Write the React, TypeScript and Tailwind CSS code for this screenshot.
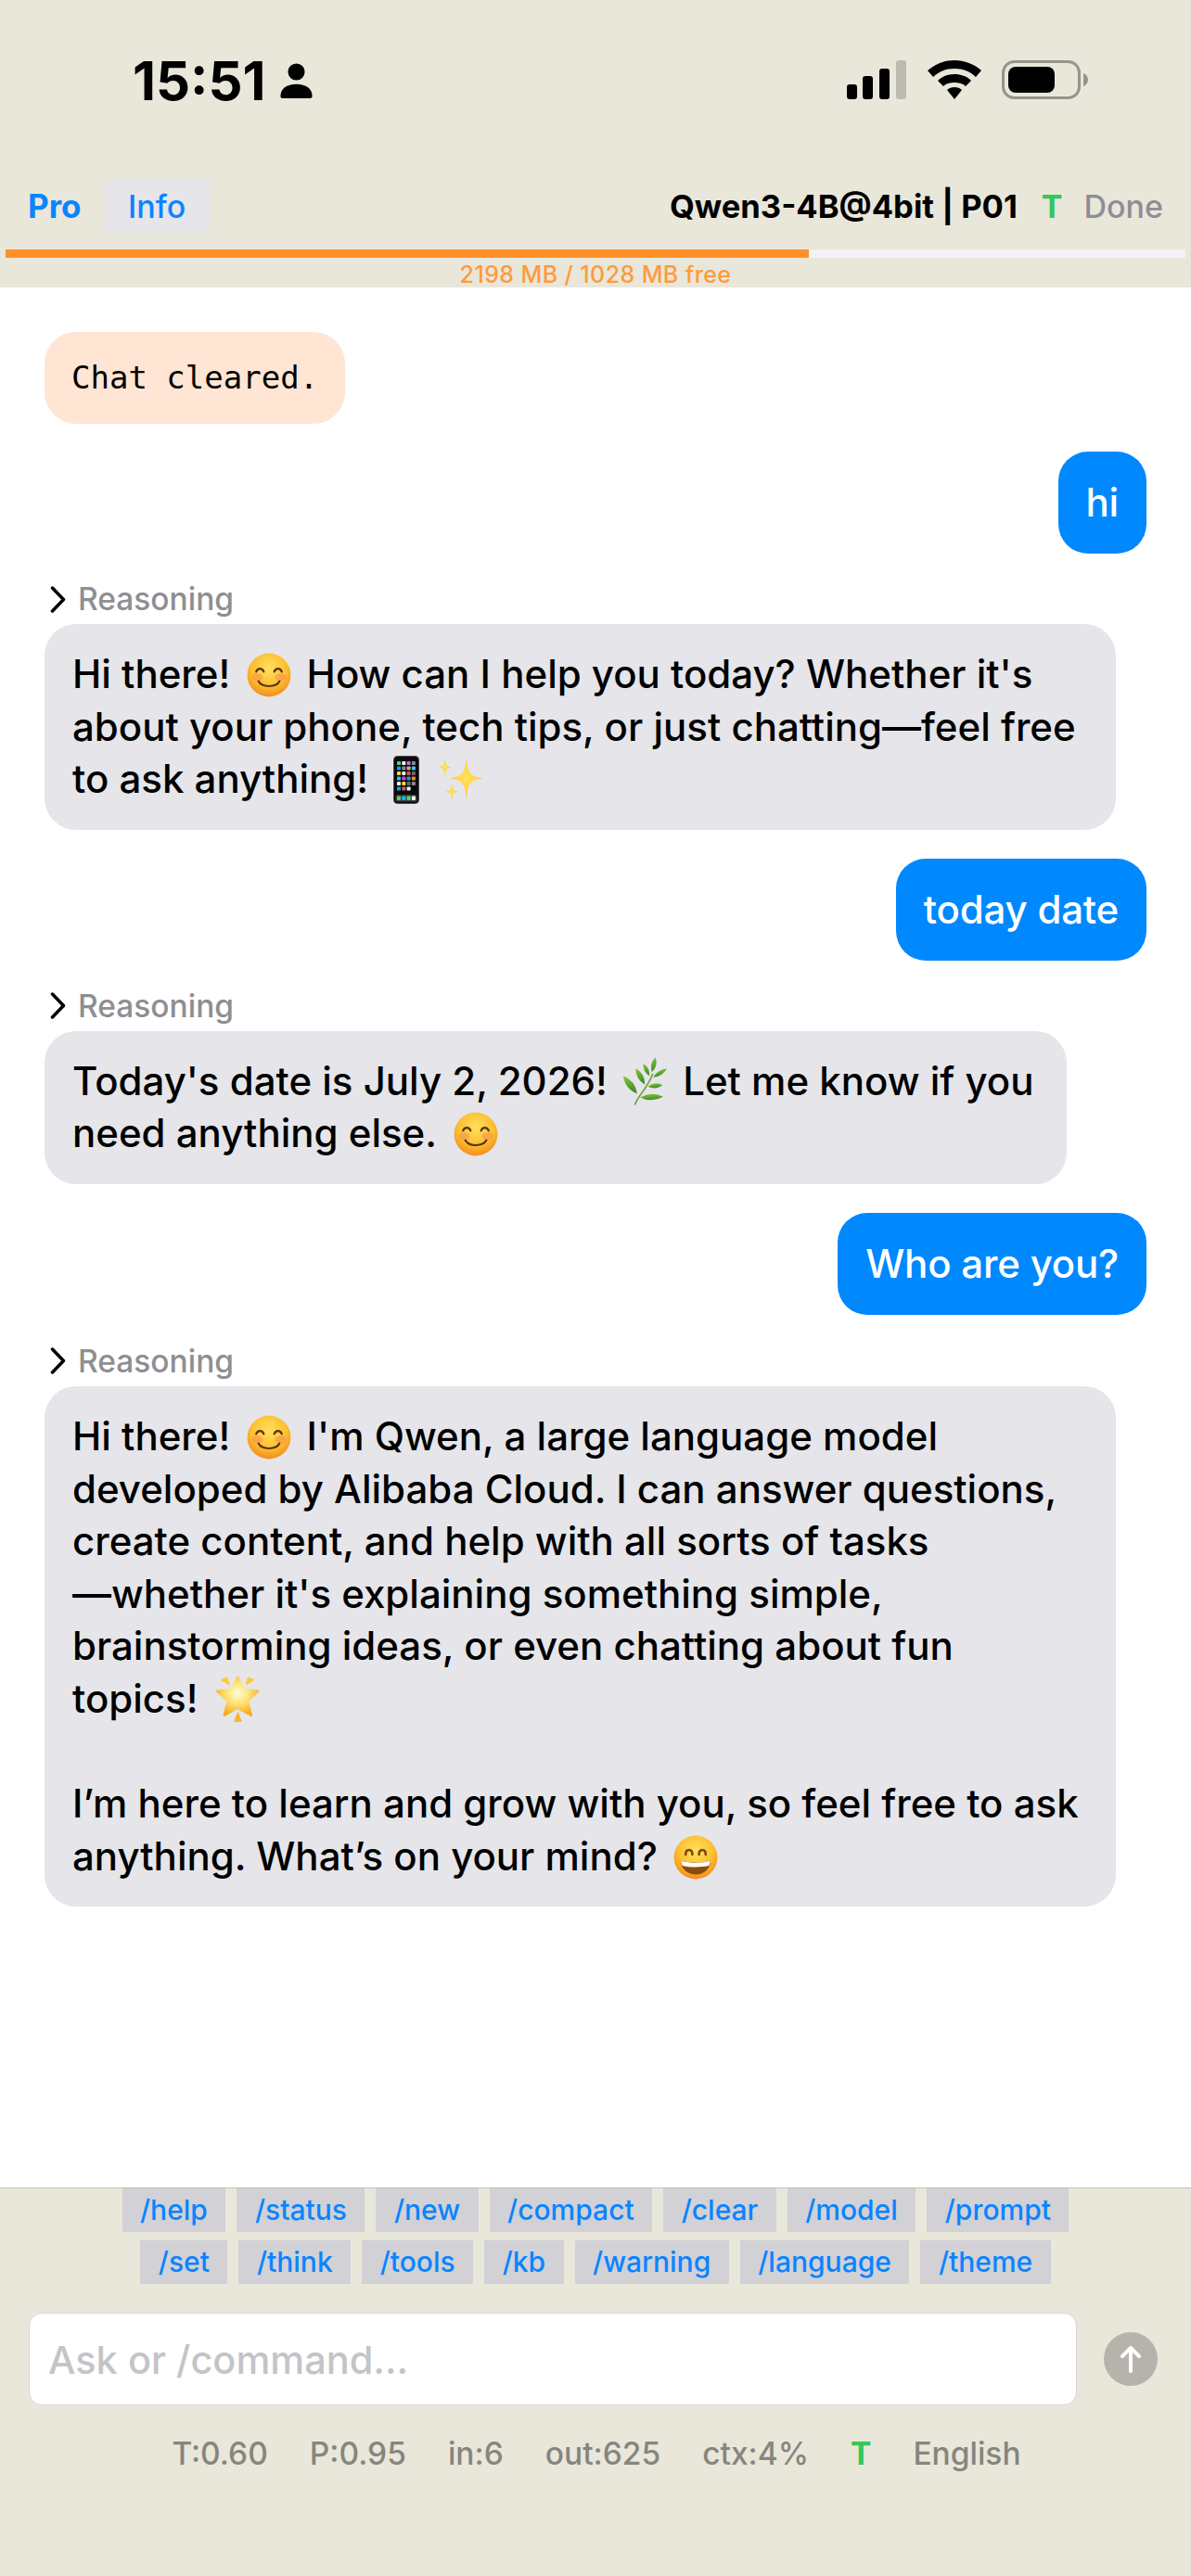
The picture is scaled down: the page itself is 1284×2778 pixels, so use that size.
import type { ReactNode } from "react";

const SANS = { fontFamily: "Inter, 'Noto Sans', sans-serif" };

function FaceGradient({ id }: { id: string }) {
  return (
    <radialGradient id={id} cx="50%" cy="35%" r="68%">
      <stop offset="0%" stopColor="#FFE15F" />
      <stop offset="60%" stopColor="#FDBE2F" />
      <stop offset="100%" stopColor="#F2871C" />
    </radialGradient>
  );
}

function Smile() {
  return (
    <svg viewBox="0 0 40 40" className="ml-[7px] mr-[5px] inline-block h-[48px] w-[48px] align-[-10px]">
      <defs>
        <FaceGradient id="face" />
      </defs>
      <circle cx="20" cy="20" r="19.500" fill="url(#face)" />
      <ellipse cx="9.500" cy="22" rx="5" ry="3.500" fill="#F98B5A" opacity="0.55" />
      <ellipse cx="30.500" cy="22" rx="5" ry="3.500" fill="#F98B5A" opacity="0.55" />
      <path d="M8.500 17c1.200-3.600 5.600-3.600 6.800 0M24.700 17c1.200-3.600 5.600-3.600 6.800 0" fill="none" stroke="#5B3410" strokeWidth="1.800" strokeLinecap="round" />
      <path d="M10.500 25.500c3 6 16 6 19 0" fill="none" stroke="#5B3410" strokeWidth="1.800" strokeLinecap="round" />
    </svg>
  );
}

function Grin() {
  return (
    <svg viewBox="0 0 40 40" className="ml-[6px] mr-[4px] inline-block h-[48px] w-[48px] align-[-10px]">
      <defs>
        <FaceGradient id="face2" />
      </defs>
      <circle cx="20" cy="20" r="19.500" fill="url(#face2)" />
      <path d="M11 17.500c0-5.500 6-5.500 6 0M23 17.500c0-5.500 6-5.500 6 0" fill="none" stroke="#7A4A10" strokeWidth="2.200" strokeLinecap="round" />
      <path d="M6.500 23c9 2.500 18 2.500 27 0 0 7-6 12.500-13.500 12.500S6.500 30 6.500 23z" fill="#8A4D0E" />
      <path d="M6.800 23.100c9 2.400 17.400 2.400 26.400 0-.2 2-.6 3-1.200 4.400-7.500 1.700-16.500 1.700-24 0-.6-1.400-1-2.400-1.200-4.400z" fill="#fff" />
    </svg>
  );
}

function Phone() {
  const colors = [
    "#4CD964", "#F2F2F2", "#C86DD7", "#8A8A8A",
    "#1E9BF0", "#8A8A8A", "#C9B48A", "#3CC8F0",
    "#FFD93B", "#F2F2F2", "#E8504F", "#6A6A6A",
    "#2FC4E0", "#E23FC0", "#1E9BF0", "#F58A1F",
    "#F2F2F2", "#FFD93B", "#6A6A6A", "#8A8A8A",
    "#1E9BF0", "#E8504F", "#F2F2F2", "#000000",
  ];
  return (
    <svg viewBox="0 0 28 52" className="ml-[16px] mr-[2px] inline-block h-[52px] w-[28px] align-[-12px]">
      <rect x="0.500" y="0.500" width="27" height="51" rx="4" fill="#0B0B0D" stroke="#4A4A4E" />
      {colors.map((c, i) => (
        <rect key={i} x={4 + (i % 4) * 5.300} y={6 + Math.floor(i / 4) * 5.500} width="4" height="4" rx="0.800" fill={c} />
      ))}
      <rect x="2.500" y="42" width="23" height="7.500" rx="2" fill="#3A3A3C" />
      {["#4CD964", "#1EB4F0", "#4CD964", "#F2F2F2"].map((c, i) => (
        <rect key={i} x={4 + i * 5.300} y="43.500" width="4" height="4.500" rx="0.800" fill={c} />
      ))}
    </svg>
  );
}

function Sparkles() {
  const star = "M0-10C.8-3 2-1 10 0 2 1 .8 3 0 10-.8 3-2 1-10 0-2-1-.8-3 0-10z";
  return (
    <svg viewBox="0 0 145 140" className="ml-[7px] inline-block h-[46px] w-[48px] align-[-8px]">
      <defs>
        <radialGradient id="spark">
          <stop offset="0%" stopColor="#FFE45A" />
          <stop offset="70%" stopColor="#FFD23C" />
          <stop offset="100%" stopColor="#F9A825" />
        </radialGradient>
      </defs>
      <path d={star} transform="translate(20 32) scale(2.100 3.200)" fill="url(#spark)" />
      <path d={star} transform="translate(90 68) scale(5.300 6.800)" fill="url(#spark)" />
      <path d={star} transform="translate(43 112) scale(2 2.800)" fill="url(#spark)" />
    </svg>
  );
}

function Herb() {
  return (
    <svg viewBox="0 0 142 155" className="mx-[6px] inline-block h-[52px] w-[47px] align-[-11px]">
      <defs>
        <linearGradient id="leaf" x1="0" y1="0" x2="0.300" y2="1">
          <stop offset="0%" stopColor="#8CC63F" />
          <stop offset="100%" stopColor="#3F8F27" />
        </linearGradient>
      </defs>
      <path d="M38 153C50 120 80 100 95 55" fill="none" stroke="#6FA53A" strokeWidth="5" strokeLinecap="round" />
      <path d="M45 118Q39 76 0 60Q5 102 45 118z" fill="url(#leaf)" />
      <path d="M70 88Q71 52 40 35Q39 70 70 88z" fill="url(#leaf)" />
      <path d="M85 60Q87 34 65 20Q63 46 85 60z" fill="url(#leaf)" />
      <path d="M93 48Q114 28 105 0Q84 20 93 48z" fill="url(#leaf)" />
      <path d="M97 65Q127 63 142 37Q113 39 97 65z" fill="url(#leaf)" />
      <path d="M80 95Q105 107 128 90Q103 77 80 95z" fill="url(#leaf)" />
      <path d="M55 130Q92 149 130 128Q92 109 55 130z" fill="url(#leaf)" />
    </svg>
  );
}

function GlowStar() {
  return (
    <svg viewBox="0 0 142 155" className="ml-[8px] inline-block h-[52px] w-[47px] align-[-11px]">
      <defs>
        <radialGradient id="star" cx="50%" cy="42%" r="60%">
          <stop offset="0%" stopColor="#FFFBD8" />
          <stop offset="45%" stopColor="#FFE478" />
          <stop offset="100%" stopColor="#F8A91F" />
        </radialGradient>
      </defs>
      <path d="M70 8L90 48 136 53 102 85 114 131 70 107 27 131 39 85 4 53 50 48z" fill="url(#star)" stroke="url(#star)" strokeWidth="8" strokeLinejoin="round" />
      <path d="M16 16L36 8 43 32z" fill="#FFC933" stroke="#FFC933" strokeWidth="3" strokeLinejoin="round" />
      <path d="M124 16L104 8 97 32z" fill="#FFC933" stroke="#FFC933" strokeWidth="3" strokeLinejoin="round" />
      <path d="M60 151L82 151 71 122z" fill="#F9B329" stroke="#F9B329" strokeWidth="3" strokeLinejoin="round" />
    </svg>
  );
}

function Bubble({ children, me }: { children: ReactNode; me?: boolean }) {
  if (me) {
    return (
      <div className="self-end rounded-[32px] bg-[#0088FF] px-[30px] py-[27px] text-[42px] leading-[56px] font-medium tracking-[-0.2px] text-white">
        {children}
      </div>
    );
  }
  return (
    <div className="rounded-[34px] bg-[#E5E5EA] px-[30px] py-[26px] text-[42px] leading-[56.6px] font-medium text-black whitespace-pre-line">
      {children}
    </div>
  );
}

function Reasoning() {
  return (
    <div className="mb-[14px] flex h-[26px] items-center gap-[13px] pl-[6px]">
      <svg viewBox="0 0 17 29" className="h-[29px] w-[17px] shrink-0" fill="none" stroke="#000" strokeWidth="3.500" strokeLinecap="round" strokeLinejoin="round">
        <path d="M2.500 2l12 12.500L2.500 27" />
      </svg>
      <span className="text-[33.5px] leading-[26px] font-medium text-[#8E8E93]">Reasoning</span>
    </div>
  );
}

const row1 = ["/help", "/status", "/new", "/compact", "/clear", "/model", "/prompt"];
const row2 = ["/set", "/think", "/tools", "/kb", "/warning", "/language", "/theme"];

function Chips({ items }: { items: string[] }) {
  return (
    <div className="flex justify-center gap-[12px]">
      {items.map((c) => (
        <span key={c} className="flex h-[47px] items-center bg-[#D1D1D6] px-[19.5px] text-[30px] font-medium text-[#0A84FF]">
          {c}
        </span>
      ))}
    </div>
  );
}

export default function App() {
  return (
    <div className="flex h-[2778px] w-[1284px] flex-col bg-white" style={SANS}>
      {/* status bar + header */}
      <div className="flex h-[310px] flex-col bg-[#E9E7DA]">
        <div className="flex h-[174px] items-start justify-between pl-[143px] pr-[110px] pt-[58px]">
          <div className="flex items-center gap-[15px]">
            <span className="text-[58px] leading-[58px] font-bold text-black">15:51</span>
            <svg viewBox="0 0 36 40" className="h-[38px] w-[35px]" fill="#000">
              <circle cx="18" cy="10" r="9.500" />
              <path d="M0 38c0-9 7-14 18-14s18 5 18 14c0 1-1 2-2 2H2c-1 0-2-1-2-2z" />
            </svg>
          </div>
          <div className="flex items-center gap-[22px] pt-[7px]">
            <svg viewBox="0 0 66 42" className="h-[42px] w-[66px]">
              <rect x="1" y="26" width="11" height="16" rx="3" fill="#000" />
              <rect x="18" y="17" width="11" height="25" rx="3" fill="#000" />
              <rect x="36" y="9" width="11" height="33" rx="3" fill="#000" />
              <rect x="54" y="0" width="11" height="42" rx="3" fill="#BDBBB1" />
            </svg>
            <svg viewBox="0 0 58 42" className="h-[42px] w-[58px]" fill="#000">
              <path d="M29 0c11 0 21 4 29 11l-6 7C46 12 38 9 29 9s-17 3-23 9l-6-7C8 4 18 0 29 0z" />
              <path d="M29 15c7 0 13 2 18 7l-6 6c-3-3-7-4-12-4s-9 1-12 4l-6-6c5-5 11-7 18-7z" />
              <path d="M29 29c3 0 6 1 8 3l-8 10-8-10c2-2 5-3 8-3z" />
            </svg>
            <svg viewBox="0 0 94 42" className="h-[42px] w-[94px]">
              <rect x="1.500" y="1.500" width="82" height="39" rx="12" fill="none" stroke="#96948B" strokeWidth="3" />
              <rect x="7" y="7" width="50" height="28" rx="8" fill="#000" />
              <path d="M88 14c3 1 5 4 5 7s-2 6-5 7z" fill="#96948B" />
            </svg>
          </div>
        </div>
        <div className="flex h-[77px] items-end pl-[30px] pr-[30px] pt-[20px]">
          <div className="flex h-[57px] items-center text-[#0A84FF]">
            <span className="text-[35px] font-bold">Pro</span>
            <span className="ml-[25px] flex h-[57px] w-[113px] items-center justify-center bg-[#E5E5EA] text-[34px] font-medium">Info</span>
          </div>
          <div className="ml-auto flex h-[57px] items-center text-[34px]">
            <span className="text-[34.6px] font-bold text-black">Qwen3-4B@4bit | P01</span>
            <span className="ml-[26px] font-bold text-[#34C759]">T</span>
            <span className="ml-[23px] font-medium text-[#8E8E93]">Done</span>
          </div>
        </div>
        <div className="mx-[6px] mt-[18px] h-[9px] bg-[#F2F2F7]">
          <div className="h-full bg-[#FF8F27]" style={{ width: `${(867 / 1273) * 100}%` }} />
        </div>
        <div className="h-[32px] text-center text-[25px] leading-[36px] font-medium tracking-[0.4px] text-[#FF9A3C]">2198 MB / 1028 MB free</div>
      </div>

      {/* messages */}
      <div className="flex flex-1 flex-col pl-[48px] pr-[48px] pt-[48px]">
        <div className="self-start rounded-[34px] bg-[#FFE5D3] px-[29px] py-[22px] text-[34px] leading-[55px] text-black" style={{ fontFamily: "'DejaVu Sans Mono', monospace" }}>
          Chat cleared.
        </div>

        <div className="mt-[30px] flex flex-col"><Bubble me>hi</Bubble></div>

        <div className="mr-[33px] mt-[36px] flex flex-col">
          <Reasoning />
          <Bubble>
            Hi there! <Smile /> How can I help you today? Whether it's about your phone, tech tips, or just chatting—feel free to ask anything! <Phone /> <Sparkles />
          </Bubble>
        </div>

        <div className="mt-[31px] flex flex-col"><Bubble me>today date</Bubble></div>

        <div className="mt-[36px] flex flex-col items-start">
          <Reasoning />
          <div className="w-[1102px]">
            <Bubble>
              Today's date is July 2, 2026! <Herb /> Let me know if you need anything else. <Smile />
            </Bubble>
          </div>
        </div>

        <div className="mt-[31px] flex flex-col"><Bubble me>Who are you?</Bubble></div>

        <div className="mr-[33px] mt-[37px] flex flex-col">
          <Reasoning />
          <Bubble>
            Hi there! <Smile /> I'm Qwen, a large language model developed by Alibaba Cloud. I can answer questions, create content, and help with all sorts of tasks{"\n"}—whether it's explaining something simple, brainstorming ideas, or even chatting about fun topics! <GlowStar />
            {"\n\n"}I’m here to learn and grow with you, so feel free to ask anything. What’s on your mind? <Grin />
          </Bubble>
        </div>
      </div>

      {/* command chips + input */}
      <div className="flex h-[419px] flex-col border-t-[1px] border-[#C2C1BA] bg-[#E9E7DA]">
        <div className="flex flex-col gap-[9px]">
          <Chips items={row1} />
          <Chips items={row2} />
        </div>
        <div className="mt-[31px] flex items-center pl-[31px] pr-[36px]">
          <div className="flex h-[100px] w-[1130px] items-center rounded-[14px] border-[1px] border-[#D5D5D5] bg-white pl-[20px] pt-[2px] text-[41.5px] font-medium text-[#C4C4C7]">
            Ask or /command...
          </div>
          <div className="ml-auto flex h-[58px] w-[58px] items-center justify-center rounded-full bg-[#B5B3AB]">
            <svg viewBox="0 0 24 30" className="h-[30px] w-[24px]" fill="none" stroke="#fff" strokeWidth="4" strokeLinecap="round" strokeLinejoin="round">
              <path d="M12 28V3M3 12l9-9 9 9" />
            </svg>
          </div>
        </div>
        <div className="mt-[34px] flex justify-center gap-[45px] pl-[2px] text-[33.5px] leading-[36px] font-medium text-[#86857F]">
          <span>T:0.60</span>
          <span>P:0.95</span>
          <span>in:6</span>
          <span>out:625</span>
          <span>ctx:4%</span>
          <span className="font-bold text-[#34C759]">T</span>
          <span>English</span>
        </div>
      </div>
    </div>
  );
}
